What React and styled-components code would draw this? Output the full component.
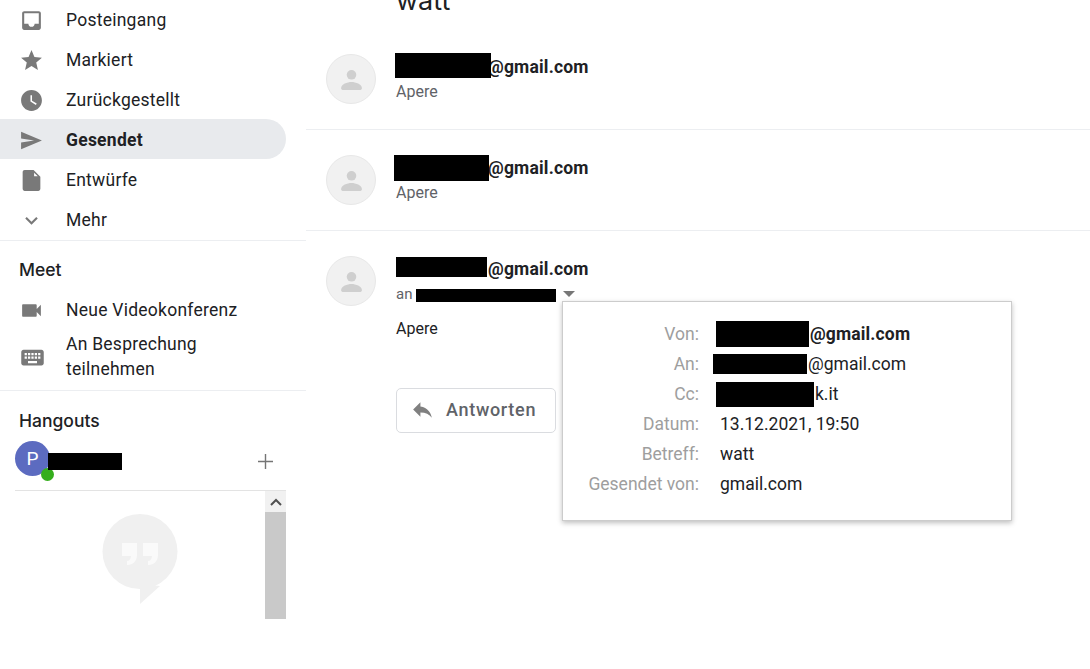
import React from 'react';
import styled, { createGlobalStyle } from 'styled-components';

const icons = {
  inbox: 'M19 3H5c-1.1 0-2 .9-2 2v14c0 1.1.9 2 2 2h14c1.1 0 2-.9 2-2V5c0-1.1-.9-2-2-2zm0 12h-4c0 1.66-1.34 3-3 3s-3-1.34-3-3H5V5h14v10z',
  star: 'M12 17.27L18.18 21l-1.64-7.03L22 9.24l-7.19-.61L12 2 9.19 8.63 2 9.24l5.46 4.73L5.82 21z',
  clock: 'M11.99 2C6.47 2 2 6.48 2 12s4.47 10 9.99 10C17.52 22 22 17.52 22 12S17.52 2 11.99 2zm4.24 14.24L11 13V7h1.5v5.25l4.5 2.67-.77 1.32z',
  send: 'M2 20.500L22 12 2 3.500v6.600L14.500 12 2 13.900z',
  draft: 'M14 2H5.500c-1.100 0-2 .9-2 2L3.500 20c0 1.100.9 2 2 2H18.500c1.100 0 2-.9 2-2V8.500L14 2zm.5 2.500L18 8h-3.500z',
  chevron: 'M16.59 8.59L12 13.17 7.41 8.59 6 10l6 6 6-6z',
  video: 'M17 10.5V7c0-.55-.45-1-1-1H4c-.55 0-1 .45-1 1v10c0 .55.45 1 1 1h12c.55 0 1-.45 1-1v-3.5l4 4v-11l-4 4z',
  keyboard: 'M20 5H4c-1.1 0-1.99.9-1.99 2L2 17c0 1.1.9 2 2 2h16c1.1 0 2-.9 2-2V7c0-1.1-.9-2-2-2zm-9 3h2v2h-2V8zm0 3h2v2h-2v-2zM8 8h2v2H8V8zm0 3h2v2H8v-2zm-1 2H5v-2h2v2zm0-3H5V8h2v2zm9 7H8v-2h8v2zm0-4h-2v-2h2v2zm0-3h-2V8h2v2zm3 3h-2v-2h2v2zm0-3h-2V8h2v2z',
  reply: 'M10 9V5l-7 7 7 7v-4.1c5 0 8.5 1.6 11 5.1-1-5-4-10-11-11z',
};

const Icon = ({ name, size = 25, color = '#797979' }) => (
  <svg width={size} height={size} viewBox="0 0 24 24" fill={color}>
    <path d={icons[name]} fillRule="evenodd" />
  </svg>
);

const navItems = [
  { icon: 'inbox', label: 'Posteingang' },
  { icon: 'star', label: 'Markiert' },
  { icon: 'clock', label: 'Zurückgestellt' },
  { icon: 'send', label: 'Gesendet', active: true },
  { icon: 'draft', label: 'Entwürfe' },
  { icon: 'chevron', label: 'Mehr' },
];

const details = [
  { label: 'Von:', text: '@gmail.com', bold: true, cover: { w: 93, h: 26, x: -4, right: 1 } },
  { label: 'An:', text: '@gmail.com', cover: { w: 94, h: 20, x: -7, right: 1 } },
  { label: 'Cc:', text: 'k.it', cover: { w: 98, h: 25, x: -4, right: 1 } },
  { label: 'Datum:', text: '13.12.2021, 19:50' },
  { label: 'Betreff:', text: 'watt' },
  { label: 'Gesendet von:', text: 'gmail.com' },
];

const Person = () => (
  <svg width="25" height="25" viewBox="0 0 24 24" fill="#cfcfcf">
    <circle cx="12" cy="7.5" r="4.6" />
    <path d="M2 20.5c0-4 6-6 10-6s10 2 10 6c0 .8-.6 1.5-1.5 1.5h-17C2.600 22 2 21.300 2 20.500z" />
  </svg>
);

export default function App() {
  return (
    <Page>
      <GlobalStyle />
      <Sidebar>
        <Nav>
          {navItems.map((item) => (
            <NavRow key={item.label} $active={item.active}>
              <NavIcon>
                <Icon name={item.icon} />
              </NavIcon>
              {item.label}
            </NavRow>
          ))}
        </Nav>
        <MeetSection>
          <SectionTitle>Meet</SectionTitle>
          <NavRow>
            <NavIcon>
              <Icon name="video" />
            </NavIcon>
            Neue Videokonferenz
          </NavRow>
          <NavRow $tall>
            <NavIcon>
              <Icon name="keyboard" size={27} />
            </NavIcon>
            <span>
              An Besprechung
              <br />
              teilnehmen
            </span>
          </NavRow>
        </MeetSection>
        <HangoutsSection>
          <SectionTitle>Hangouts</SectionTitle>
          <UserRow>
            <UserAvatar>
              P<OnlineDot />
            </UserAvatar>
            <Cover $w={74} $h={17} $x={-2} />
            <PlusButton>
              <svg width="15" height="15" viewBox="0 0 15 15" stroke="#757575" strokeWidth="1.4">
                <path d="M7.500 0v15M0 7.500h15" />
              </svg>
            </PlusButton>
          </UserRow>
          <HangoutsList>
            <EmptyState>
              <svg width="76" height="90" viewBox="0 0 76 90">
                <circle cx="38" cy="37.500" r="37.500" fill="#f0f0f0" />
                <path fill="#f0f0f0" d="M38 70v20l20-18z" />
                <path
                  fill="#fafafa"
                  d="M20 29h15v12c0 6-4 10-10 10v-4c2 0 4-2 4-5h-9zM41 29h15v12c0 6-4 10-10 10v-4c2 0 4-2 4-5h-9z"
                />
              </svg>
            </EmptyState>
            <ScrollBar>
              <ScrollButton>
                <svg width="12" height="8" viewBox="0 0 12 8" fill="none" stroke="#505050" strokeWidth="2">
                  <path d="M1 7l5-5 5 5" />
                </svg>
              </ScrollButton>
              <ScrollThumb />
            </ScrollBar>
          </HangoutsList>
        </HangoutsSection>
      </Sidebar>
      <Main>
        <TitleBar>
          <Title>watt</Title>
        </TitleBar>
        <Message $top={24}>
          <Avatar>
            <Person />
          </Avatar>
          <MessageBody>
            <Sender>
              <Cover $w={96} $h={25} $x={-1} $y={-1} $right={-3} />
              @gmail.com
            </Sender>
            <Snippet>Apere</Snippet>
          </MessageBody>
        </Message>
        <Message>
          <Avatar>
            <Person />
          </Avatar>
          <MessageBody>
            <Sender>
              <Cover $w={95} $h={26} $x={-2} $right={-1} />
              @gmail.com
            </Sender>
            <Snippet>Apere</Snippet>
          </MessageBody>
        </Message>
        <Message $open>
          <Avatar>
            <Person />
          </Avatar>
          <MessageBody>
            <Sender>
              <Cover $w={91} $h={20} $right={1} $y={-2} />
              @gmail.com
            </Sender>
            <Recipient>
              an
              <Cover $w={140} $h={13} $x={4} $y={2} />
              <Caret />
            </Recipient>
            <BodyText>Apere</BodyText>
            <ReplyButton>
              <Icon name="reply" size={25} color="#808080" />
              Antworten
            </ReplyButton>
          </MessageBody>
          <DetailsPopover>
            {details.map((row) => (
              <React.Fragment key={row.label}>
                <DetailLabel>{row.label}</DetailLabel>
                <DetailValue $bold={row.bold}>
                  {row.cover && <Cover $w={row.cover.w} $h={row.cover.h} $x={row.cover.x} $right={row.cover.right} />}
                  {row.text}
                </DetailValue>
              </React.Fragment>
            ))}
          </DetailsPopover>
        </Message>
      </Main>
    </Page>
  );
}

const GlobalStyle = createGlobalStyle`
  html, body {
    margin: 0;
    padding: 0;
    background: #fff;
  }
  body {
    font-family: Roboto, "Liberation Sans", sans-serif;
    color: #202124;
  }
`;

const Page = styled.div`
  display: flex;
  width: 1090px;
  height: 669px;
  overflow: hidden;
  background: #fff;
`;

const Sidebar = styled.aside`
  width: 306px;
  flex: none;
  display: flex;
  flex-direction: column;
`;

const Nav = styled.nav`
  display: flex;
  flex-direction: column;
  border-bottom: 1px solid #eceef1;
`;

const NavRow = styled.div`
  display: flex;
  align-items: center;
  box-sizing: border-box;
  width: 286px;
  height: ${(p) => (p.$tall ? '60px' : '40px')};
  margin: ${(p) => (p.$active ? '-1px 0 1px' : '0')};
  padding: ${(p) => (p.$active ? '2px 0 0' : p.$tall ? '0 0 6px' : '0')};
  line-height: 25px;
  font-size: 17.5px;
  letter-spacing: 0.25px;
  font-weight: ${(p) => (p.$active ? 700 : 400)};
  color: #202124;
  background: ${(p) => (p.$active ? '#e8eaed' : 'transparent')};
  border-radius: 0 20px 20px 0;
`;

const NavIcon = styled.span`
  width: 66px;
  flex: none;
  display: flex;
  padding-left: 19px;
  box-sizing: border-box;
`;

const SectionTitle = styled.h3`
  margin: 0;
  padding-left: 19px;
  height: 40px;
  line-height: 40px;
  font-family: Inter, sans-serif;
  font-size: 17.5px;
  font-weight: 500;
  color: #202124;
`;

const MeetSection = styled.section`
  display: flex;
  flex-direction: column;
  padding-top: 9px;
  border-bottom: 1px solid #eceef1;
`;

const HangoutsSection = styled.section`
  display: flex;
  flex-direction: column;
  padding-top: 10px;
`;

const UserRow = styled.div`
  display: flex;
  align-items: center;
  margin-left: 15px;
  width: 271px;
  height: 50px;
  padding-bottom: 9px;
  box-sizing: border-box;
  border-bottom: 1px solid #e3e3e3;
`;

const UserAvatar = styled.div`
  position: relative;
  align-self: flex-start;
  width: 35px;
  height: 35px;
  border-radius: 50%;
  background: #5c6bc0;
  color: #fff;
  font-size: 19px;
  line-height: 35px;
  text-align: center;
`;

const OnlineDot = styled.span`
  position: absolute;
  right: -4px;
  bottom: -5px;
  width: 13px;
  height: 13px;
  border-radius: 50%;
  background: #35ae1c;
`;

const PlusButton = styled.div`
  display: flex;
  margin-left: auto;
  margin-right: 13px;
  padding-top: 1px;
`;

const HangoutsList = styled.div`
  display: flex;
  margin-left: 15px;
  width: 271px;
  height: 128px;
`;

const EmptyState = styled.div`
  flex: 1;
  display: flex;
  justify-content: center;
  padding-top: 23px;
`;

const ScrollBar = styled.div`
  width: 21px;
  display: flex;
  flex-direction: column;
`;

const ScrollButton = styled.div`
  height: 21px;
  background: #f1f1f1;
  display: flex;
  align-items: center;
  justify-content: center;
`;

const ScrollThumb = styled.div`
  flex: 1;
  background: #c9c9c9;
`;

const Main = styled.main`
  flex: 1;
  display: flex;
  flex-direction: column;
`;

const TitleBar = styled.div`
  height: 30px;
  padding-left: 90px;
  overflow: hidden;
  display: flex;
  flex-direction: column;
`;

const Title = styled.h1`
  margin: -17px 0 0;
  font-family: Inter, sans-serif;
  font-size: 27px;
  line-height: 36px;
  font-weight: 400;
  color: #202124;
`;

const Message = styled.article`
  position: relative;
  display: flex;
  padding: ${(p) => p.$top ?? 25}px 0 25px 20px;
  border-bottom: ${(p) => (p.$open ? 'none' : '1px solid #eceef1')};
`;

const Avatar = styled.div`
  width: 48px;
  height: 48px;
  flex: none;
  border: 1px solid #e8e8e8;
  border-radius: 50%;
  background: #f1f1f1;
  display: flex;
  align-items: center;
  justify-content: center;
`;

const MessageBody = styled.div`
  display: flex;
  flex-direction: column;
  align-items: flex-start;
  margin-left: 20px;
`;

const Sender = styled.div`
  display: flex;
  align-items: center;
  height: 25px;
  font-size: 17.5px;
  letter-spacing: 0.2px;
  font-weight: 700;
  color: #202124;
`;

const Cover = styled.span`
  display: inline-block;
  flex: none;
  width: ${(p) => p.$w}px;
  height: ${(p) => p.$h}px;
  margin-left: ${(p) => p.$x ?? 0}px;
  margin-right: ${(p) => p.$right ?? 0}px;
  transform: translateY(${(p) => p.$y ?? 0}px);
  background: #000;
`;

const Snippet = styled.div`
  height: 25px;
  line-height: 25px;
  font-size: 16px;
  color: #5f6368;
`;

const Recipient = styled.div`
  display: flex;
  align-items: center;
  height: 25px;
  font-size: 15px;
  color: #5f6368;
`;

const Caret = styled.span`
  width: 0;
  height: 0;
  margin-left: 7px;
  border-left: 6px solid transparent;
  border-right: 6px solid transparent;
  border-top: 6px solid #777;
`;

const BodyText = styled.div`
  margin-top: 10px;
  height: 25px;
  line-height: 25px;
  font-size: 16px;
  color: #202124;
`;

const ReplyButton = styled.button`
  display: flex;
  align-items: center;
  gap: 11px;
  width: 160px;
  height: 45px;
  margin-top: 47px;
  padding: 0 0 2px 13px;
  background: #fff;
  border: 1px solid #dadce0;
  border-radius: 5px;
  font-family: Roboto, sans-serif;
  font-size: 18px;
  font-weight: 500;
  letter-spacing: 0.7px;
  color: #5f6368;
`;

const DetailsPopover = styled.div`
  position: absolute;
  left: 256px;
  top: 70px;
  box-sizing: border-box;
  width: 450px;
  height: 220px;
  padding-top: 17px;
  display: grid;
  grid-template-columns: 136px 1fr;
  grid-auto-rows: 30px;
  column-gap: 21px;
  align-content: start;
  background: #fff;
  border: 1px solid #ccc;
  box-shadow: 0 2px 5px rgba(0, 0, 0, 0.25);
`;

const DetailLabel = styled.div`
  text-align: right;
  font-size: 17.5px;
  line-height: 30px;
  color: #9e9e9e;
`;

const DetailValue = styled.div`
  display: flex;
  align-items: center;
  font-size: 17.5px;
  letter-spacing: ${(p) => (p.$bold ? '0.15px' : '0')};
  font-weight: ${(p) => (p.$bold ? 700 : 400)};
  color: #202124;
`;
